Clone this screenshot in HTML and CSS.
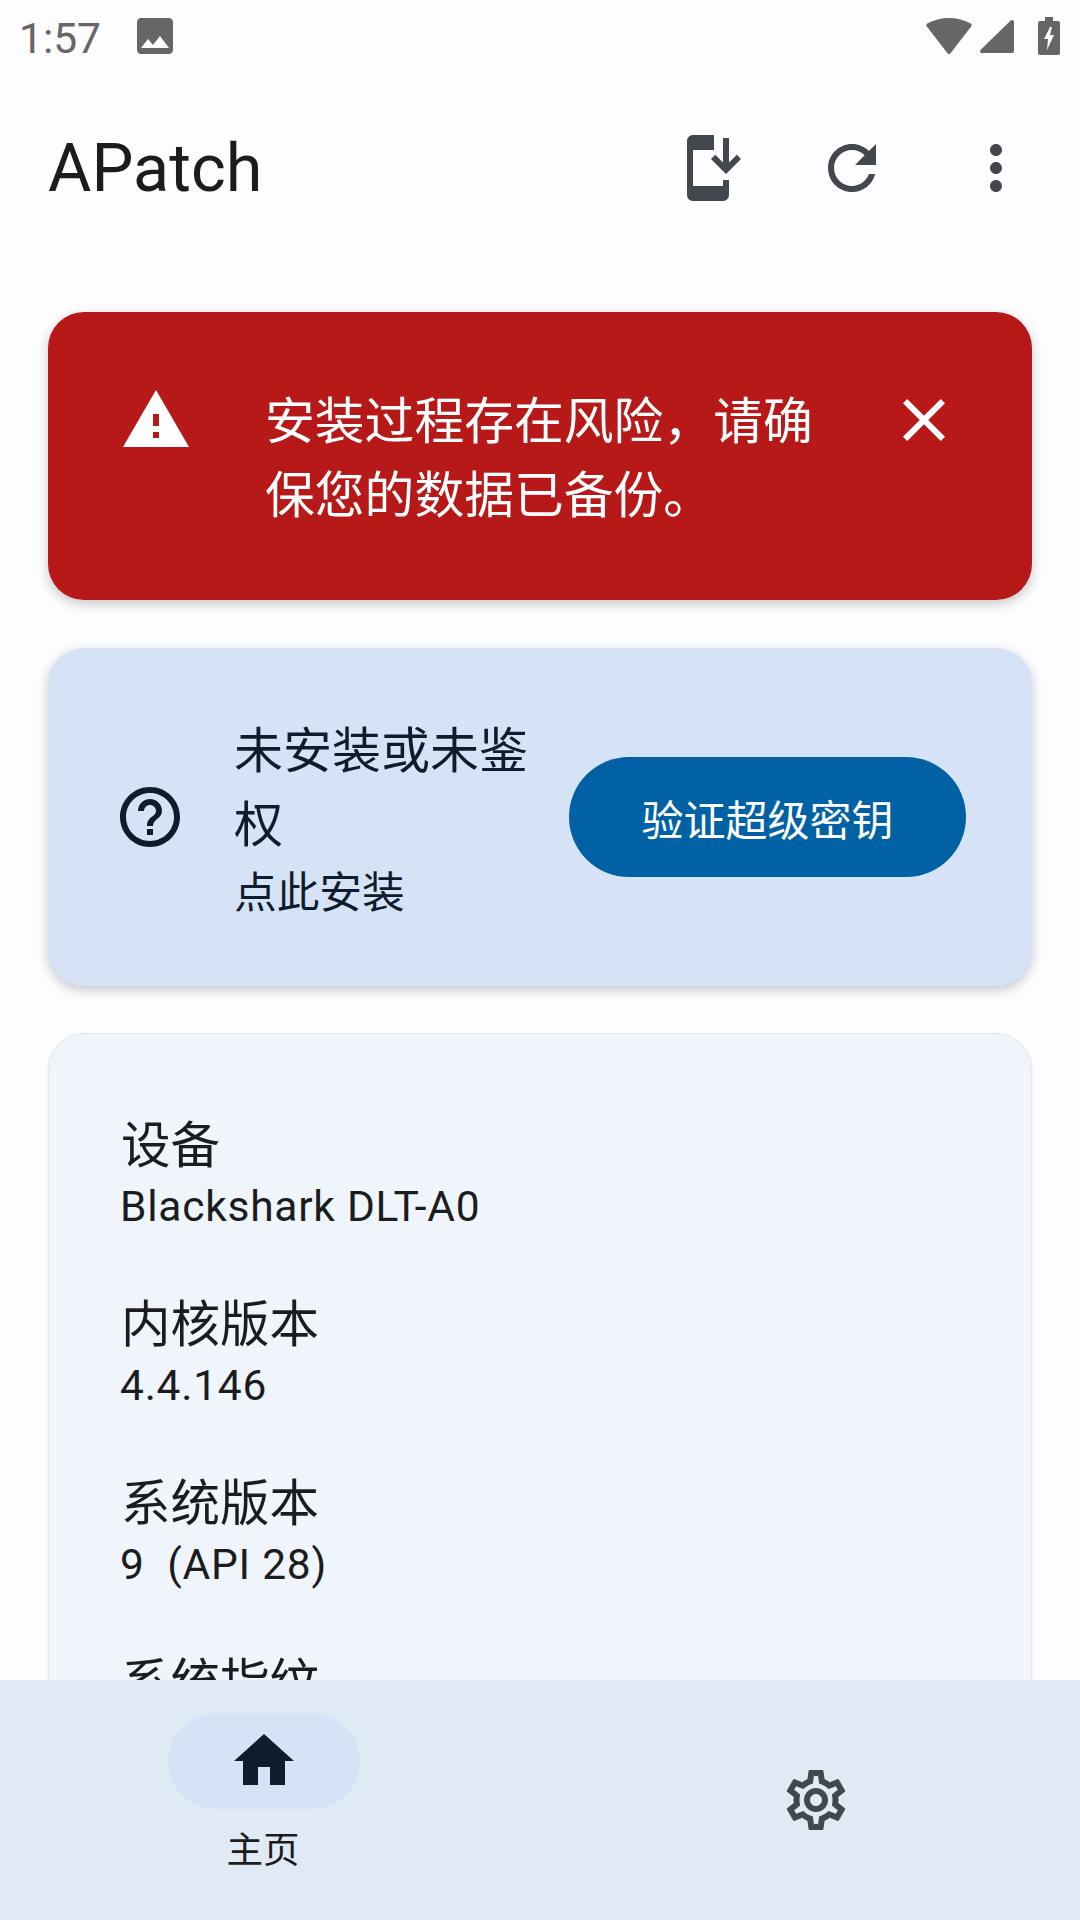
FILE: index.html
```html
<!DOCTYPE html>
<html lang="zh-CN">
<head>
<meta charset="utf-8">
<title>APatch</title>
<link rel="stylesheet" href="styles.css">
</head>
<body>
<div class="app">
  <div class="statusbar">
    <span class="clock">1:57</span>
    <svg class="ic-image" viewBox="3 3 18 18"><path d="M21 19V5c0-1.100-.9-2-2-2H5c-1.100 0-2 .9-2 2v14c0 1.100.9 2 2 2h14c1.100 0 2-.9 2-2zM8.500 13.500l2.500 3.010L14.500 12l4.500 6H5l3.500-4.500z"/></svg>
    <span class="spacer"></span>
    <svg class="ic-wifi" viewBox="0 0 46 36"><path d="M23 36c-.8 0-1.300-.5-1.700-1L.8 8.500C0 7.500.2 6.300 1.300 5.600 7.500 1.900 15 0 23 0s15.500 1.900 21.700 5.600c1.100.7 1.300 1.900.5 2.900L24.700 35c-.4.5-.9 1-1.700 1z"/></svg>
    <svg class="ic-signal" viewBox="0 0 34 33"><path d="M34 2v29a2 2 0 0 1-2 2H2c-1.700 0-2.500-2-1.300-3.200L30.700.6C32 -.6 34 .2 34 2z"/></svg>
    <svg class="ic-battery" viewBox="0 0 22 38"><path fill-rule="evenodd" d="M7 0h8v4h5a2 2 0 0 1 2 2v30a2 2 0 0 1-2 2H2a2 2 0 0 1-2-2V6a2 2 0 0 1 2-2h5zM12 10 6 22h4l-1 11 7-15h-4l2-8z"/></svg>
  </div>

  <header class="topbar">
    <h1 class="title">APatch</h1>
    <button class="iconbtn"><svg class="icon" viewBox="0 0 24 24"><path d="M17 18H7V6h7V1H7C5.900 1 5 1.900 5 3v18c0 1.100.9 2 2 2h10c1.100 0 2-.9 2-2v-5h-2v2zM18 14l5-5-1.410-1.410L19 10.170V2h-2v8.170l-2.590-2.580L13 9l5 5z"/></svg></button>
    <button class="iconbtn"><svg class="icon" viewBox="0 0 24 24"><path d="M17.650 6.350C16.200 4.900 14.210 4 12 4c-4.420 0-7.990 3.580-7.990 8s3.570 8 7.990 8c3.730 0 6.840-2.550 7.730-6h-2.080c-.82 2.330-3.040 4-5.650 4-3.310 0-6-2.690-6-6s2.690-6 6-6c1.660 0 3.140.69 4.220 1.780L13 11h7V4l-2.350 2.350z"/></svg></button>
    <button class="iconbtn"><svg class="icon" viewBox="0 0 24 24"><path d="M12 8c1.100 0 2-.9 2-2s-.9-2-2-2-2 .9-2 2 .9 2 2 2zm0 2c-1.100 0-2 .9-2 2s.9 2 2 2 2-.9 2-2-.9-2-2-2zm0 6c-1.100 0-2 .9-2 2s.9 2 2 2 2-.9 2-2-.9-2-2-2z"/></svg></button>
  </header>

  <main class="content">
    <section class="card warn">
      <svg class="icon white" viewBox="0 0 24 24"><path d="M1 21h22L12 2 1 21zm12-3h-2v-2h2v2zm0-4h-2v-4h2v4z"/></svg>
      <p class="warn-text">安装过程存在风险，请确保您的数据已备份。</p>
      <svg class="icon white" viewBox="0 0 24 24"><path d="M19 6.410 17.590 5 12 10.590 6.410 5 5 6.410 10.590 12 5 17.590 6.410 19 12 13.410 17.590 19 19 17.590 13.410 12z"/></svg>
    </section>

    <section class="card status">
      <svg class="icon dark" viewBox="0 0 24 24"><path d="M11 18h2v-2h-2v2zm1-16C6.480 2 2 6.480 2 12s4.480 10 10 10 10-4.480 10-10S17.520 2 12 2zm0 18c-4.410 0-8-3.590-8-8s3.590-8 8-8 8 3.590 8 8-3.590 8-8 8zm0-14c-2.210 0-4 1.790-4 4h2c0-1.100.9-2 2-2s2 .9 2 2c0 2-3 1.750-3 5h2c0-2.250 3-2.500 3-5 0-2.210-1.790-4-4-4z"/></svg>
      <div class="status-text">
        <div class="status-title">未安装或未鉴权</div>
        <div class="status-sub">点此安装</div>
      </div>
      <button class="primary">验证超级密钥</button>
    </section>

    <section class="card info">
      <div class="row"><div class="row-label">设备</div><div class="row-value">Blackshark DLT-A0</div></div>
      <div class="row"><div class="row-label">内核版本</div><div class="row-value">4.4.146</div></div>
      <div class="row"><div class="row-label">系统版本</div><div class="row-value">9  (API 28)</div></div>
      <div class="row"><div class="row-label">系统指纹</div></div>
    </section>
  </main>

  <nav class="nav">
    <div class="nav-item">
      <div class="pill"><svg class="icon dark" viewBox="0 0 24 24"><path d="M10 20v-6h4v6h5v-8h3L12 3 2 12h3v8z"/></svg></div>
      <div class="nav-label">主页</div>
    </div>
    <div class="nav-item">
      <div class="pill plain"><svg class="icon" viewBox="0 0 24 24"><path d="M19.430 12.980c.04-.32.07-.64.07-.98 0-.34-.03-.66-.07-.98l2.110-1.650c.19-.15.24-.42.12-.64l-2-3.460c-.09-.16-.26-.25-.44-.25-.06 0-.12.01-.17.03l-2.490 1c-.52-.4-1.080-.73-1.690-.98l-.38-2.650C14.460 2.180 14.250 2 14 2h-4c-.25 0-.46.18-.49.42l-.38 2.650c-.61.25-1.170.59-1.690.98l-2.490-1c-.06-.02-.12-.03-.18-.03-.17 0-.34.09-.43.25l-2 3.460c-.13.22-.07.49.12.64l2.110 1.650c-.04.32-.07.65-.07.98 0 .33.03.66.07.98l-2.110 1.650c-.19.15-.24.42-.12.64l2 3.460c.09.16.26.25.44.25.06 0 .12-.01.17-.03l2.490-1c.52.4 1.080.73 1.690.98l.38 2.650c.03.24.24.42.49.42h4c.25 0 .46-.18.49-.42l.38-2.650c.61-.25 1.170-.59 1.690-.98l2.490 1c.06.02.12.03.18.03.17 0 .34-.09.43-.25l2-3.460c.12-.22.07-.49-.12-.64l-2.110-1.650zm-1.980-1.710c.04.31.05.52.05.73 0 .21-.02.43-.05.73l-.14 1.130.89.7 1.080.84-.7 1.210-1.270-.51-1.040-.42-.9.68c-.43.32-.84.56-1.250.73l-1.060.43-.16 1.130-.2 1.350h-1.400l-.19-1.350-.16-1.130-1.060-.43c-.43-.18-.83-.41-1.230-.71l-.91-.7-1.060.43-1.270.51-.7-1.210 1.080-.84.89-.7-.14-1.130c-.03-.31-.05-.54-.05-.74s.02-.43.05-.73l.14-1.130-.89-.7-1.080-.84.7-1.210 1.270.51 1.040.42.9-.68c.43-.32.84-.56 1.250-.73l1.060-.43.16-1.130.2-1.350h1.390l.19 1.350.16 1.130 1.060.43c.43.18.83.41 1.230.71l.91.7 1.060-.43 1.270-.51.7 1.210-1.070.85-.89.7.14 1.130zM12 8c-2.210 0-4 1.790-4 4s1.790 4 4 4 4-1.790 4-4-1.790-4-4-4zm0 6c-1.100 0-2-.9-2-2s.9-2 2-2 2 .9 2 2-.9 2-2 2z"/></svg></div>
    </div>
  </nav>
</div>
</body>
</html>
```

FILE: styles.css
```css
* { box-sizing: border-box; }
html, body { margin: 0; padding: 0; }
body {
  font-family: Roboto, "Noto Sans CJK SC", sans-serif;
  background: #fdfcff;
  color: #1a1c1e;
}
.app { width: 1080px; height: 1920px; display: flex; flex-direction: column; overflow: hidden; }

.statusbar { height: 72px; flex: none; display: flex; align-items: center; padding: 0 20px 0 19px; fill: #666; color: #666; }
.clock { font-size: 42.500px; width: 118px; padding-top: 4px; }
.ic-image { width: 36px; height: 36px; }
.spacer { flex: 1; }
.ic-wifi { width: 46px; height: 36px; }
.ic-signal { width: 34px; height: 33px; margin-left: 8px; }
.ic-battery { width: 22px; height: 38px; margin-left: 24px; }

.topbar { height: 192px; flex: none; display: flex; align-items: center; padding: 0 12px 0 48px; }
.title { flex: 1; margin: 0; font-size: 66.500px; font-weight: 400; color: #1a1c1e; }
.iconbtn { width: 144px; height: 144px; border: 0; padding: 0; background: none; display: flex; align-items: center; justify-content: center; }
.icon { width: 72px; height: 72px; flex: none; fill: #43474e; display: block; }
.white { fill: #fff; }
.dark { fill: #0f1c2e; }

.content { flex: 1; min-height: 0; overflow: hidden; padding: 48px 48px 0; display: flex; flex-direction: column; gap: 48px; }
.card { border-radius: 36px; flex: none; }

.warn { background: #b71918; color: #fff; height: 288px; padding: 72px 72px 0; display: flex; box-shadow: 0 4px 12px rgba(0,0,0,.22); }
.warn-text { margin: 0 63px 0 73px; padding-top: 1px; width: 560px; font-size: 49.800px; line-height: 74px; }

.status { background: #d6e3f7; color: #0f1c2e; height: 338px; padding: 0 66px; display: flex; align-items: center; box-shadow: 0 4px 12px rgba(0,0,0,.22); }
.status-text { flex: 1; margin-left: 48px; min-width: 0; padding-top: 4px; }
.status-title { font-size: 49px; line-height: 74px; }
.status-sub { font-size: 42.700px; line-height: 60px; }
.primary { flex: none; width: 397px; height: 120px; border: 0; border-radius: 60px; background: #0061a4; color: #fff; font: inherit; font-size: 42px; padding: 0; }

.info { background: #f0f4fb; border: 1px solid #e6e8ee; margin-top: -1px; padding: 75px 71px 0 72px; display: flex; flex-direction: column; gap: 51px; box-shadow: 0 1px 3px rgba(0,0,0,.08); }
.row-label { font-size: 49.500px; line-height: 74px; }
.row-value { font-size: 42.500px; line-height: 60px; letter-spacing: .75px; white-space: pre; margin-top: -6px; margin-left: -1px; }

.nav { height: 240px; flex: none; background: #e0eaf4; display: flex; gap: 360px; padding: 33px 0 0 168px; }
.nav-item { width: 192px; display: flex; flex-direction: column; align-items: center; }
.pill { width: 192px; height: 96px; border-radius: 48px; background: #d6e3f7; display: flex; align-items: center; justify-content: center; }
.pill.plain { background: none; margin-top: 39px; }
.nav-label { font-size: 36.500px; line-height: 48px; margin-top: 18px; margin-left: -2px; color: #1a1c1e; }
```
